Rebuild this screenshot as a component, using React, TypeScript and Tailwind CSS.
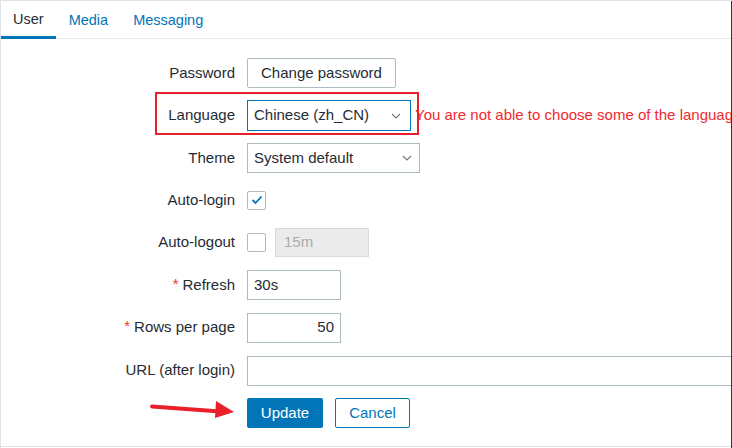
import React from 'react';

const ChevronDown: React.FC = () => (
  <svg width="10" height="6" viewBox="0 0 10 6" className="shrink-0">
    <path d="M1 1l4 4 4-4" fill="none" stroke="#6f7b82" strokeWidth="1.2" />
  </svg>
);

const Row: React.FC<{ label?: React.ReactNode; h: string; children: React.ReactNode }> = ({ label, h, children }) => (
  <div className={`flex items-center ${h}`}>
    <div className="w-[234px] shrink-0 text-right whitespace-nowrap">{label}</div>
    <div className="ml-3 flex items-center flex-1 min-w-0">{children}</div>
  </div>
);

const Required: React.FC<{ text: string }> = ({ text }) => (
  <span>
    <span className="text-[#e33734] mr-1 relative -top-px">*</span>
    {text}
  </span>
);

const App: React.FC = () => {
  return (
    <div
      className="relative w-[732px] h-[448px] overflow-hidden bg-white border-t border-l border-[#dde3e7] text-[15px] text-[#1f2c33]"
      style={{ fontFamily: '"Liberation Sans", Arial, sans-serif' }}
    >
      {/* tabs */}
      <div className="flex h-[38px] border-b border-[#e5e9eb] text-[14.5px]">
        <div className="h-[38px] px-3 flex items-center border-b-[3px] border-[#0275b8] text-[#1f2c33] pt-[2px]">User</div>
        <div className="h-[37px] px-3 ml-[1px] flex items-center text-[#0275b8] pt-[2px]">Media</div>
        <div className="h-[37px] px-3 ml-[1px] flex items-center text-[#0275b8] pt-[2px]">Messaging</div>
      </div>

      {/* form */}
      <div className="flex flex-col mt-[13px]">
        <Row label="Password" h="h-[42px]">
          <button className="h-[30px] w-[149px] shrink-0 border border-[#acbbc2] rounded-[2px] bg-white text-[#1f2c33]">
            Change password
          </button>
        </Row>
        <Row label="Language" h="h-[43px]">
          <div className="h-[31px] w-[164px] shrink-0 border border-[#0275b8] flex items-center justify-between pl-[6px] pr-[9px]">
            <span className="whitespace-nowrap">Chinese (zh_CN)</span>
            <ChevronDown />
          </div>
          <span className="ml-[4px] whitespace-nowrap text-[#ee2a30]">
            You are not able to choose some of the languages
          </span>
        </Row>
        <Row label="Theme" h="h-[42px]">
          <div className="h-[30px] w-[173px] shrink-0 border border-[#acbbc2] flex items-center justify-between pl-[6px] pr-[7px]">
            <span className="whitespace-nowrap">System default</span>
            <ChevronDown />
          </div>
        </Row>
        <Row label="Auto-login" h="h-[42px]">
          <div className="w-[19px] h-[19px] shrink-0 border border-[#acbbc2] rounded-[2px] flex items-center justify-center">
            <svg width="12" height="10" viewBox="0 0 12 10">
              <path d="M1.5 5l3 3 6-6.5" fill="none" stroke="#0275b8" strokeWidth="1.8" />
            </svg>
          </div>
        </Row>
        <Row label="Auto-logout" h="h-[43px]">
          <div className="w-[19px] h-[19px] shrink-0 border border-[#acbbc2] rounded-[2px]" />
          <div className="ml-[9px] h-[29px] w-[94px] shrink-0 border border-[#dcdcdc] bg-[#ebebeb] flex items-center pl-[8px] text-[#acacac]">
            15m
          </div>
        </Row>
        <Row label={<Required text="Refresh" />} h="h-[42px]">
          <div className="h-[30px] w-[94px] shrink-0 border border-[#acbbc2] flex items-center pl-[6px]">30s</div>
        </Row>
        <Row label={<Required text="Rows per page" />} h="h-[43px]">
          <div className="h-[30px] w-[94px] shrink-0 border border-[#acbbc2] flex items-center justify-end pr-[6px]">50</div>
        </Row>
        <Row label="URL (after login)" h="h-[43px]">
          <div className="h-[30px] w-[520px] shrink-0 border border-[#acbbc2]" />
        </Row>
        <Row h="h-[42px]">
          <button className="h-[30px] w-[76px] shrink-0 rounded-[2px] bg-[#0275b8] text-white">Update</button>
          <button className="ml-3 h-[30px] w-[75px] shrink-0 rounded-[2px] border border-[#0275b8] bg-white text-[#0275b8]">
            Cancel
          </button>
        </Row>
      </div>

      {/* annotations */}
      <div className="absolute left-[154px] top-[91px] w-[264px] h-[43px] border-2 border-[#e8202a]" />
      <svg className="absolute left-[147px] top-[396px]" width="92" height="26" viewBox="0 0 92 26">
        <path d="M4 9.5 L72 14.5" stroke="#e8202a" strokeWidth="4" strokeLinecap="round" />
        <path d="M68 4 L86 15 L67 21 Z" fill="#e8202a" />
      </svg>

      {/* frame edges */}
      <div className="absolute left-0 right-0 bottom-[1px] h-[1px] bg-[#dde3e7]" />
      <div className="absolute top-0 bottom-0 right-0 w-[1px] bg-[#3a332e]" />
    </div>
  );
};

export default App;
